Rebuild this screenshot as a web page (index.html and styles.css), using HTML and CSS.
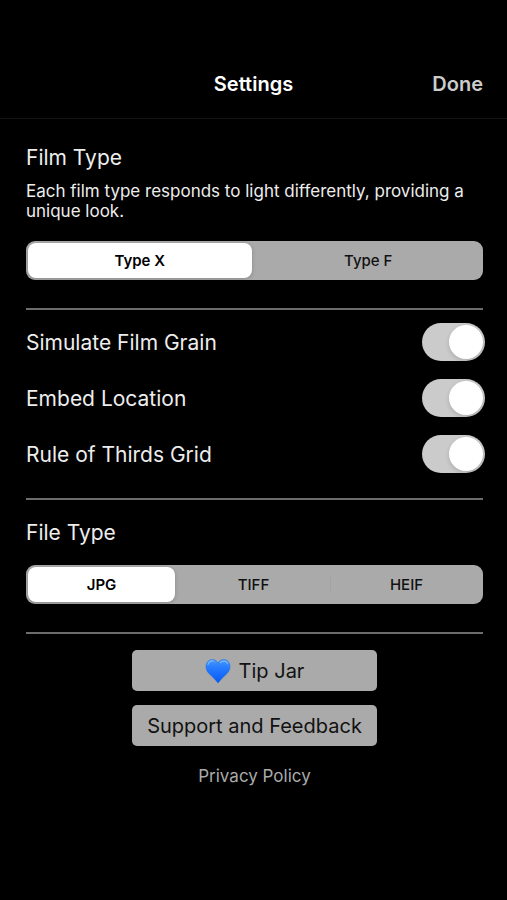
FILE: index.html
```html
<!DOCTYPE html>
<html lang="en">
<head>
    <meta charset="UTF-8">
    <meta name="viewport" content="width=device-width, initial-scale=1.0">
    <title>Settings</title>
    <link rel="stylesheet" href="styles.css">
</head>
<body>
    <header class="navbar">
        <h1 class="navbar-title">Settings</h1>
        <button type="button" class="done-btn">Done</button>
    </header>
    <main class="content">
        <section class="section film-section">
            <h2 class="section-title" id="film-title">Film Type</h2>
            <p class="section-text">Each film type responds to light differently, providing a unique look.</p>
            <div class="segmented" role="radiogroup" aria-labelledby="film-title">
                <input type="radio" name="film-type" id="film-x" checked>
                <label for="film-x">Type X</label>
                <input type="radio" name="film-type" id="film-f">
                <label for="film-f">Type F</label>
            </div>
        </section>
        <section class="section switch-list">
            <div class="switch-row">
                <label for="grain">Simulate Film Grain</label>
                <input type="checkbox" class="switch" id="grain" checked>
            </div>
            <div class="switch-row">
                <label for="location">Embed Location</label>
                <input type="checkbox" class="switch" id="location" checked>
            </div>
            <div class="switch-row">
                <label for="thirds">Rule of Thirds Grid</label>
                <input type="checkbox" class="switch" id="thirds" checked>
            </div>
        </section>
        <section class="section file-section">
            <h2 class="section-title" id="file-title">File Type</h2>
            <div class="segmented" role="radiogroup" aria-labelledby="file-title">
                <input type="radio" name="file-type" id="file-jpg" checked>
                <label for="file-jpg">JPG</label>
                <input type="radio" name="file-type" id="file-tiff">
                <label for="file-tiff">TIFF</label>
                <input type="radio" name="file-type" id="file-heif">
                <label for="file-heif">HEIF</label>
            </div>
        </section>
        <div class="actions">
            <button type="button" class="action-btn">
                <svg class="heart" viewBox="0 0 26 26" aria-hidden="true">
                    <defs>
                        <linearGradient id="heart-fill" x1="0" y1="0" x2="0" y2="1">
                            <stop offset="0" stop-color="#4c9dff"/>
                            <stop offset="0.3" stop-color="#2a7fff"/>
                            <stop offset="1" stop-color="#0558f5"/>
                        </linearGradient>
                    </defs>
                    <path d="M13 25C12 24 10 21 6 17.500C2.500 14.500 1 12 1 8.500C1 4.500 3.800 1.500 7.300 1.500C9.900 1.500 12 3 13 5.300C14 3 16.100 1.500 18.700 1.500C22.200 1.500 25 4.500 25 8.500C25 12 23.500 14.500 20 17.500C16 21 14 24 13 25Z" fill="url(#heart-fill)" stroke="#1c66d8" stroke-width="0.500"/>
                    <path d="M3 6.500C4 3.500 6.500 2.500 8.500 3M15.500 4.500C17.500 2.500 21 2.700 22.700 5.500" fill="none" stroke="#8ccbff" stroke-width="1.200" stroke-linecap="round" opacity="0.700"/>
                </svg>
                Tip Jar
            </button>
            <button type="button" class="action-btn">Support and Feedback</button>
            <a href="#" class="privacy-link">Privacy Policy</a>
        </div>
    </main>
</body>
</html>
```

FILE: styles.css
```css
body {
    font-family: Inter, "Liberation Sans", sans-serif;
    margin: 0;
    background-color: #000;
    color: #ededed;
}
button, input {
    font-family: inherit;
    margin: 0;
}
.navbar {
    display: grid;
    grid-template-columns: 1fr auto 1fr;
    align-items: center;
    padding: 72px 24px 22px;
    border-bottom: 1px solid #141414;
}
.navbar-title {
    grid-column: 2;
    margin: 0;
    font-size: 20px;
    line-height: 24px;
    font-weight: 600;
    color: #fff;
}
.done-btn {
    justify-self: end;
    padding: 0;
    border: none;
    background: none;
    color: #ccc;
    font-size: 20px;
    line-height: 24px;
    font-weight: 600;
    cursor: pointer;
}
.content {
    padding: 0 24px 0 26px;
}
.section {
    border-bottom: 2px solid #6c6c6c;
}
.film-section {
    padding: 25px 0 28px;
}
.file-section {
    padding: 19px 0 28px;
}
.section-title {
    margin: 0;
    font-size: 21px;
    line-height: 28px;
    font-weight: 400;
}
.section-text {
    margin: 9px 0 20px;
    font-size: 17px;
    line-height: 20px;
}
.file-section .section-title {
    margin-bottom: 18px;
}
.segmented {
    display: flex;
    height: 39px;
    border-radius: 9px;
    background-color: #aaa;
}
.segmented input {
    appearance: none;
    width: 0;
    height: 0;
}
.segmented label {
    flex: 1 1 0;
    margin: 2px 3px 2px 2px;
    border-radius: 8px;
    color: #111;
    font-size: 15px;
    line-height: 35px;
    font-weight: 500;
    text-align: center;
    cursor: pointer;
}
.segmented input:checked + label {
    background-color: #fff;
    color: #000;
    font-weight: 600;
    box-shadow: 0 1px 4px rgba(0, 0, 0, 0.2);
}
/* thin separator between two unselected segments */
.segmented input:not(:checked) + label + input:not(:checked) {
    align-self: center;
    width: 1px;
    height: 17px;
    background-color: #a2a2a2;
}
.switch-list {
    padding: 4px 0 16px;
}
.switch-row {
    display: flex;
    justify-content: space-between;
    align-items: center;
    height: 56px;
    margin-right: -2px;
    font-size: 21px;
}
.switch {
    appearance: none;
    box-sizing: border-box;
    width: 63px;
    height: 38px;
    padding: 2px;
    border-radius: 19px;
    background-color: #999;
    cursor: pointer;
}
.switch::before {
    content: "";
    display: block;
    width: 34px;
    height: 34px;
    border-radius: 50%;
    background-color: #fff;
    box-shadow: 0 2px 5px rgba(0, 0, 0, 0.15);
}
.switch:checked {
    background-color: #cbcbcb;
}
.switch:checked::before {
    margin-left: auto;
}
.actions {
    display: flex;
    flex-direction: column;
    align-items: center;
    gap: 14px;
    padding: 16px 0 40px;
}
.action-btn {
    display: flex;
    justify-content: center;
    align-items: center;
    gap: 8px;
    width: 245px;
    height: 41px;
    padding: 0;
    border: none;
    border-radius: 5px;
    background-color: #aaa;
    color: #111;
    font-size: 20px;
    cursor: pointer;
}
.heart {
    width: 26px;
    height: 26px;
}
.privacy-link {
    margin-top: 4px;
    color: #aaa;
    font-size: 17px;
    line-height: 24px;
    text-decoration: none;
}
```
